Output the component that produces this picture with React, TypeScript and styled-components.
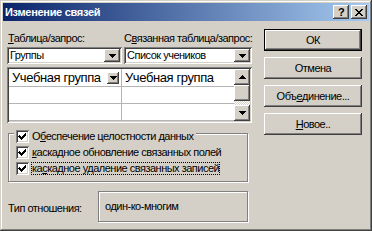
import React from "react";
import styled, { createGlobalStyle } from "styled-components";

const Global = createGlobalStyle`
  html, body { margin: 0; padding: 0; background: #d4d0c8; }
  body { font-family: "Liberation Sans", Arial, sans-serif; font-size: 11px; letter-spacing: -0.5px; color: #000; }
  * { box-sizing: border-box; }
`;

const raised = `
  box-shadow: inset -1px -1px #404040, inset 1px 1px #ffffff, inset -2px -2px #808080, inset 2px 2px #d4d0c8;
`;
const sunken = `
  box-shadow: inset 1px 1px #808080, inset -1px -1px #ffffff, inset 2px 2px #404040, inset -2px -2px #d4d0c8;
`;

const Window = styled.div`
  width: 372px;
  height: 231px;
  background: #d4d0c8;
  padding: 3px;
  display: flex;
  flex-direction: column;
  box-shadow: inset -1px -1px #404040, inset 1px 1px #d4d0c8, inset -2px -2px #808080, inset 2px 2px #ffffff;
`;

const TitleBar = styled.div`
  height: 18px;
  display: flex;
  align-items: center;
  padding: 0 2px 0 2px;
  background: linear-gradient(to right, #0a246a, #a6caf0);
`;

const Title = styled.div`
  flex: 1;
  color: #fff;
  font-weight: bold;
  font-size: 11px;
  letter-spacing: -0.3px;
  line-height: 14px;
  white-space: nowrap;
`;

const TitleButton = styled.div<{ $gap?: number }>`
  width: 16px;
  height: 14px;
  margin-left: ${(p) => p.$gap ?? 0}px;
  background: #d4d0c8;
  ${raised}
  display: flex;
  align-items: center;
  justify-content: center;
  font-weight: bold;
  font-size: 11px;
  line-height: 14px;
`;

const Body = styled.div`
  flex: 1;
  display: flex;
  padding: 8px 7px 0 4px;
  gap: 12px;
`;

const LeftColumn = styled.div`
  width: 245px;
  padding-top: 2px;
  display: flex;
  flex-direction: column;
`;

const FieldRow = styled.div`
  display: flex;
  gap: 2px;
`;

const FieldLabel = styled.div<{ $w: number }>`
  width: ${(p) => p.$w}px;
  height: 14px;
  line-height: 14px;
  padding-left: ${(p) => (p.$w < 120 ? 1 : 0)}px;
  margin-bottom: 2px;
  white-space: nowrap;
`;

const Combo = styled.div<{ $w: number }>`
  width: ${(p) => p.$w}px;
  height: 17px;
  background: #fff;
  ${sunken}
  padding: 2px;
  display: flex;
  align-items: center;
`;

const ComboText = styled.div`
  flex: 1;
  padding-left: 1px;
  line-height: 13px;
  white-space: nowrap;
  overflow: hidden;
`;

const DropButton = styled.div<{ $w: number; $h: number }>`
  width: ${(p) => p.$w}px;
  height: ${(p) => p.$h}px;
  flex: none;
  background: #d4d0c8;
  ${raised}
  display: flex;
  align-items: center;
  justify-content: center;
`;

const Grid = styled.div`
  margin-top: 3px;
  height: 56px;
  background: #fff;
  ${sunken}
  padding: 2px;
  display: flex;
`;

const GridBody = styled.div`
  flex: 1;
  display: grid;
  grid-template-columns: 113px 1fr;
  grid-template-rows: 18px 17px 1fr;
`;

const Cell = styled.div<{ $last?: boolean }>`
  border-right: ${(p) => (p.$last ? "none" : "1px solid #b4b4b4")};
  border-bottom: 1px solid #b4b4b4;
  display: flex;
  align-items: center;
  padding: 0 2px 0 3px;
  font-size: 13px;
  letter-spacing: -0.4px;
  white-space: nowrap;
`;

const CellText = styled.div`
  flex: 1;
  line-height: 15px;
`;

const ScrollBar = styled.div`
  width: 16px;
  display: flex;
  flex-direction: column;
`;

const ScrollTrack = styled.div`
  flex: 1;
  background-image: repeating-conic-gradient(#ffffff 0 25%, #d4d0c8 0 50%);
  background-size: 2px 2px;
`;

const GroupFrame = styled.div`
  margin: 10px 4px 0 1px;
  border: 1px solid #808080;
  box-shadow: inset 1px 1px #ffffff, 1px 1px #ffffff;
  padding: 0 0 6px 7px;
  display: flex;
  flex-direction: column;
  gap: 3px;
`;

const CheckRow = styled.div<{ $legend?: boolean }>`
  display: flex;
  align-items: center;
  height: 13px;
  align-self: flex-start;
  margin-top: ${(p) => (p.$legend ? -4 : 0)}px;
  margin-left: ${(p) => (p.$legend ? -2 : 0)}px;
  padding: 0 ${(p) => (p.$legend ? 2 : 0)}px;
  background: #d4d0c8;
  gap: 2px;
  white-space: nowrap;
`;

const CheckBox = styled.div`
  width: 13px;
  height: 13px;
  flex: none;
  background: #fff;
  ${sunken}
  display: flex;
  align-items: center;
  justify-content: center;
`;

const CheckLabel = styled.span<{ $focus?: boolean }>`
  line-height: 13px;
  padding: 0 1px;
  outline: ${(p) => (p.$focus ? "1px dotted #000" : "none")};
  outline-offset: -1px;
`;

const Acc = styled.span`
  text-decoration: underline;
`;

const TypeRow = styled.div`
  margin-top: 9px;
  display: flex;
  align-items: center;
`;

const TypeLabel = styled.div`
  width: 91px;
  padding-left: 1px;
  line-height: 14px;
  padding-top: 2px;
`;

const TypeBox = styled.div`
  width: 150px;
  height: 31px;
  border: 1px solid #808080;
  box-shadow: inset 1px 1px #ffffff, 1px 1px #ffffff;
  padding: 8px 0 0 6px;
  line-height: 13px;
`;

const RightColumn = styled.div`
  width: 98px;
  display: flex;
  flex-direction: column;
  gap: 6px;
`;

const Button = styled.div<{ $default?: boolean }>`
  height: 22px;
  display: flex;
  align-items: center;
  justify-content: center;
  background: #d4d0c8;
  white-space: nowrap;
  ${(p) =>
    p.$default
      ? `border: 1px solid #000; box-shadow: inset -1px -1px #404040, inset 1px 1px #ffffff, inset -2px -2px #808080, inset 2px 2px #d4d0c8;`
      : raised}
`;

const Arrow = ({ up }: { up?: boolean }) => (
  <svg width="7" height="4" viewBox="0 0 7 4" shapeRendering="crispEdges" style={up ? { transform: "rotate(180deg)" } : undefined}>
    <path d="M0 0h7v1h-1v1h-1v1h-1v1h-1v-1h-1v-1h-1v-1h-1z" fill="#000" />
  </svg>
);

const Check = () => (
  <svg width="9" height="9" viewBox="0 0 9 9" shapeRendering="crispEdges">
    <path
      d="M1 3h1v1h1v1h1v-1h1v-1h1v-1h1v-1h1v3h-1v1h-1v1h-1v1h-1v1h-1v-1h-1v-1h-1v-1h-1z"
      fill="#000"
    />
  </svg>
);

const CloseX = () => (
  <svg width="8" height="7" viewBox="0 0 8 7" shapeRendering="crispEdges">
    <path
      d="M0 0h2v1h1v1h2v-1h1v-1h2v1h-1v1h-1v1h-1v1h1v1h1v1h1v1h-2v-1h-1v-1h-2v1h-1v1h-2v-1h1v-1h1v-1h1v-1h-1v-1h-1v-1h-1z"
      fill="#000"
    />
  </svg>
);

export default function App() {
  return (
    <>
      <Global />
      <Window>
        <TitleBar>
          <Title>Изменение связей</Title>
          <TitleButton>?</TitleButton>
          <TitleButton $gap={2}>
            <CloseX />
          </TitleButton>
        </TitleBar>
        <Body>
          <LeftColumn>
            <FieldRow>
              <FieldLabel $w={115}>
                <Acc>Т</Acc>аблица/запрос:
              </FieldLabel>
              <FieldLabel $w={128}>
                С<Acc>в</Acc>язанная таблица/запрос:
              </FieldLabel>
            </FieldRow>
            <FieldRow>
              <Combo $w={115}>
                <ComboText>Группы</ComboText>
                <DropButton $w={16} $h={13}>
                  <Arrow />
                </DropButton>
              </Combo>
              <Combo $w={128}>
                <ComboText>Список учеников</ComboText>
                <DropButton $w={16} $h={13}>
                  <Arrow />
                </DropButton>
              </Combo>
            </FieldRow>
            <Grid>
              <GridBody>
                <Cell>
                  <CellText>Учебная группа</CellText>
                  <DropButton $w={12} $h={12}>
                    <Arrow />
                  </DropButton>
                </Cell>
                <Cell $last>
                  <CellText>Учебная группа</CellText>
                </Cell>
                <Cell />
                <Cell $last />
                <Cell />
                <Cell $last />
              </GridBody>
              <ScrollBar>
                <DropButton $w={16} $h={16}>
                  <Arrow up />
                </DropButton>
                <DropButton $w={16} $h={16} />
                <ScrollTrack />
                <DropButton $w={16} $h={16}>
                  <Arrow />
                </DropButton>
              </ScrollBar>
            </Grid>
            <GroupFrame>
              <CheckRow $legend>
                <CheckBox>
                  <Check />
                </CheckBox>
                <CheckLabel>
                  О<Acc>б</Acc>еспечение целостности данных
                </CheckLabel>
              </CheckRow>
              <CheckRow>
                <CheckBox>
                  <Check />
                </CheckBox>
                <CheckLabel>
                  <Acc>к</Acc>аскадное обновление связанных полей
                </CheckLabel>
              </CheckRow>
              <CheckRow>
                <CheckBox>
                  <Check />
                </CheckBox>
                <CheckLabel $focus>
                  ка<Acc>с</Acc>кадное удаление связанных записей
                </CheckLabel>
              </CheckRow>
            </GroupFrame>
            <TypeRow>
              <TypeLabel>Тип отношения:</TypeLabel>
              <TypeBox>один-ко-многим</TypeBox>
            </TypeRow>
          </LeftColumn>
          <RightColumn>
            <Button $default>ОК</Button>
            <Button>Отмена</Button>
            <Button>
              Объ<Acc>е</Acc>динение...
            </Button>
            <Button>
              <Acc>Н</Acc>овое..
            </Button>
          </RightColumn>
        </Body>
      </Window>
    </>
  );
}
